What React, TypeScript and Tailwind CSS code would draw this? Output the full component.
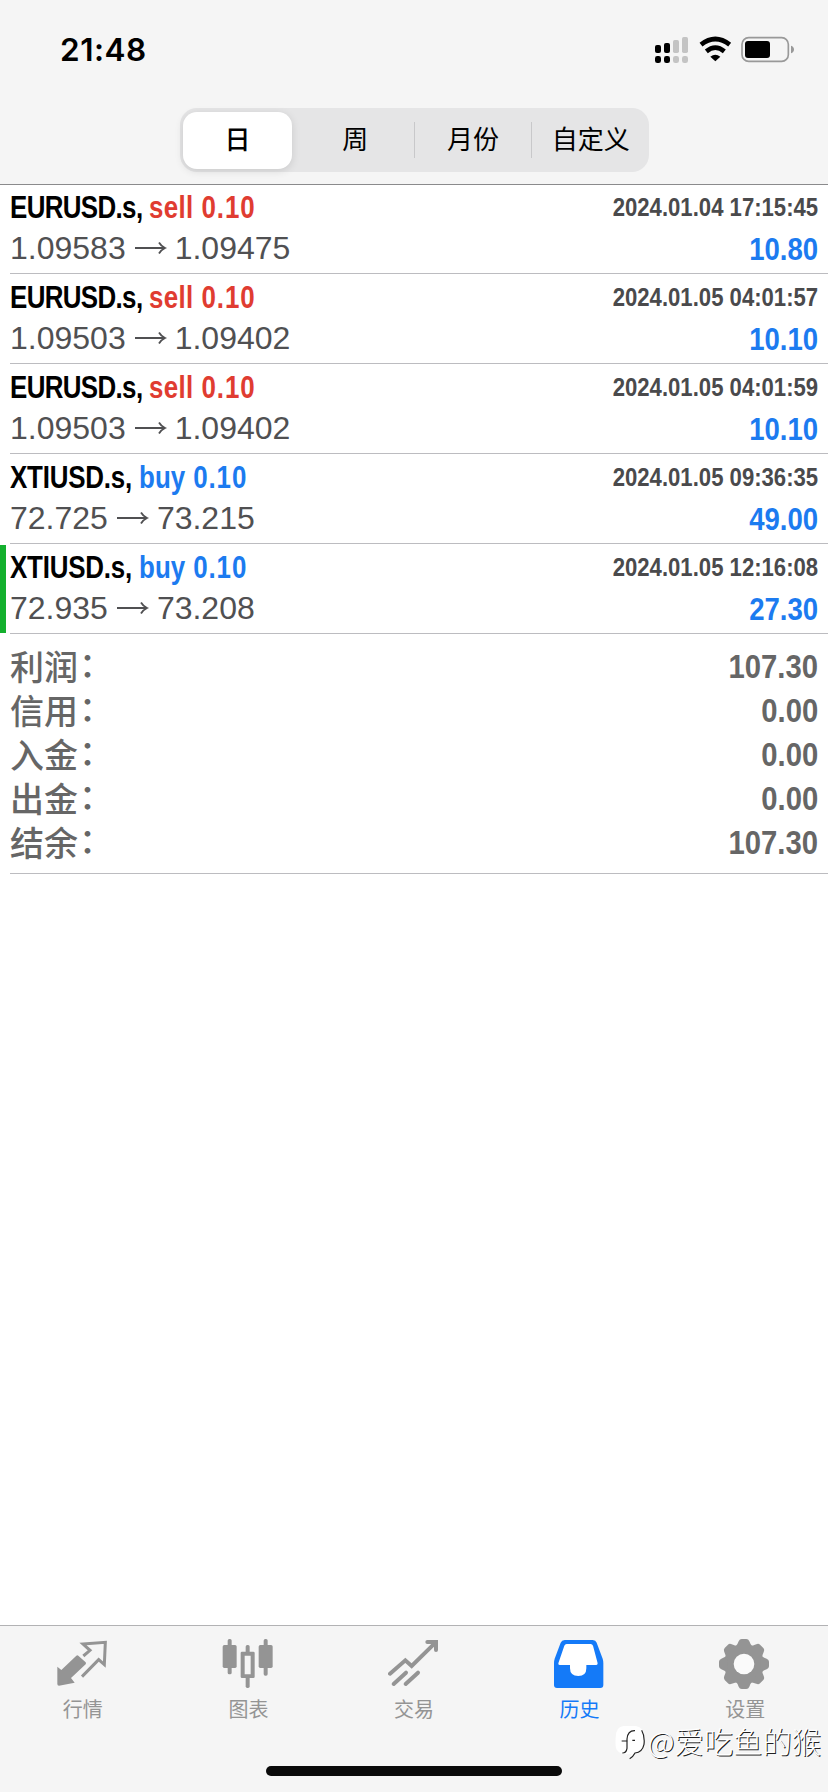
import { useState } from "react";
import type { ReactNode } from "react";

type Deal = {
  symbol: string;
  side: "buy" | "sell";
  volume: string;
  open: string;
  close: string;
  time: string;
  profit: string;
  marked?: boolean;
};

const periods = ["日", "周", "月份", "自定义"];

const symbolTracking: Record<string, string> = {
  "EURUSD.s": "tracking-[-0.8px]",
  "XTIUSD.s": "tracking-[-0.25px]",
};

const deals: Deal[] = [
  { symbol: "EURUSD.s", side: "sell", volume: "0.10", open: "1.09583", close: "1.09475", time: "2024.01.04 17:15:45", profit: "10.80" },
  { symbol: "EURUSD.s", side: "sell", volume: "0.10", open: "1.09503", close: "1.09402", time: "2024.01.05 04:01:57", profit: "10.10" },
  { symbol: "EURUSD.s", side: "sell", volume: "0.10", open: "1.09503", close: "1.09402", time: "2024.01.05 04:01:59", profit: "10.10" },
  { symbol: "XTIUSD.s", side: "buy", volume: "0.10", open: "72.725", close: "73.215", time: "2024.01.05 09:36:35", profit: "49.00" },
  { symbol: "XTIUSD.s", side: "buy", volume: "0.10", open: "72.935", close: "73.208", time: "2024.01.05 12:16:08", profit: "27.30", marked: true },
];

const summary = [
  { label: "利润", value: "107.30" },
  { label: "信用", value: "0.00" },
  { label: "入金", value: "0.00" },
  { label: "出金", value: "0.00" },
  { label: "结余", value: "107.30" },
];

function TabIcon({ children }: { children: ReactNode }) {
  return (
    <svg viewBox="0 0 156 156" className="w-[52px] h-[52px]" fill="none">
      {children}
    </svg>
  );
}

function QuotesIcon() {
  return (
    <TabIcon>
      <path d="M1 86L13 96L58 53Q61 50 64 53L86 73Q88 76 86 79L42 120L53 134L6 143Q1 143 1 138Z" fill="currentColor" />
      <path d="M79 54L99 37L78 18L145 13L142 80L125 65L75 116" stroke="currentColor" strokeWidth="9" />
    </TabIcon>
  );
}

function ChartIcon() {
  return (
    <TabIcon>
      <g fill="currentColor">
        <rect x="2" y="21" width="42" height="69" rx="5" />
        <rect x="17" y="3" width="12" height="106" rx="5" />
        <path fillRule="evenodd" d="M60 41H94Q98 41 98 45V116Q98 120 94 120H60Q56 120 56 116V45Q56 41 60 41ZM68 53V109H86V53Z" />
        <rect x="71" y="21" width="12" height="26" rx="5" />
        <rect x="71" y="114" width="12" height="36" rx="5" />
        <rect x="110" y="21" width="42" height="69" rx="5" />
        <rect x="125" y="3" width="12" height="110" rx="5" />
      </g>
    </TabIcon>
  );
}

function TradeIcon() {
  return (
    <TabIcon>
      <g stroke="currentColor" strokeWidth="12" strokeLinecap="round">
        <path d="M6 107L52 67L71 84L140 16" />
        <path d="M118 12H144V36" />
        <path d="M17 138L54 104M53 138L90 104" />
      </g>
    </TabIcon>
  );
}

function HistoryIcon() {
  return (
    <TabIcon>
      <path
        d="M32 6H116Q125 6 128 14L146 62Q148 68 148 75V141Q148 150 139 150H9Q0 150 0 141V75Q0 68 2 62L20 14Q23 6 32 6Z"
        fill="currentColor"
      />
      <path
        d="M38 18H110Q115 18 117 23L131 76Q131 81 127 81H97V91Q97 114 73 114Q48 114 48 91V81H17Q12 81 13 76L31 23Q33 18 38 18Z"
        fill="#fff"
      />
    </TabIcon>
  );
}

function SettingsIcon() {
  return (
    <TabIcon>
      <g fill="currentColor">
        <circle cx="75" cy="78" r="58" />
        {[0, 45, 90, 135, 180, 225, 270, 315].map((angle) => (
          <path key={angle} d="M48 28Q56 20 59 10Q62 3 68 3H82Q88 3 91 10Q94 20 102 28Z" transform={`rotate(${angle} 75 78)`} />
        ))}
      </g>
      <circle cx="75" cy="78" r="31" fill="#fafafa" />
    </TabIcon>
  );
}

const tabs = [
  { label: "行情", icon: <QuotesIcon /> },
  { label: "图表", icon: <ChartIcon /> },
  { label: "交易", icon: <TradeIcon /> },
  { label: "历史", icon: <HistoryIcon /> },
  { label: "设置", icon: <SettingsIcon /> },
];

function StatusIcons() {
  return (
    <svg viewBox="0 0 420 84" className="w-[140px] h-7" fill="none">
      {/* Signal */}
      <g fill="#000">
        <rect x="3" y="27" width="18" height="24" rx="6" />
        <rect x="30" y="21" width="18" height="30" rx="6" />
        <rect x="3" y="60" width="18" height="21" rx="7" />
        <rect x="30" y="60" width="18" height="21" rx="7" />
      </g>
      <g fill="#c4c4c4">
        <rect x="57" y="12" width="18" height="39" rx="5" />
        <rect x="84" y="3" width="18" height="48" rx="5" />
        <rect x="57" y="60" width="18" height="21" rx="7" />
        <rect x="84" y="60" width="18" height="21" rx="7" />
      </g>
      {/* Wifi */}
      <path d="M141 26Q184 -8 227 26" stroke="#000" strokeWidth="14" />
      <path d="M157 46Q184 24 211 46" stroke="#000" strokeWidth="14" />
      <path d="M169 62Q184 51 199 62L184 76Z" fill="#000" />
      {/* Battery */}
      <rect x="264" y="5" width="139" height="71" rx="20" stroke="#999" strokeWidth="5" />
      <rect x="273" y="15" width="75" height="51" rx="9" fill="#000" />
      <path d="M411 29Q420 32 420 40.500Q420 49 411 52Z" fill="#999" />
    </svg>
  );
}

function DealRow({ deal }: { deal: Deal }) {
  return (
    <div className="flex h-[90px]">
      <div className={deal.marked ? "w-1.5 mt-px mb-px bg-[#14b02e]" : "w-1.5"} />
      <div className="flex-1 ml-1 pt-[3px] pr-2.5 border-b border-[#bcbcc0]">
        <div className="flex justify-between h-10 leading-10 font-bold whitespace-pre">
          <div className="text-[32px] origin-left scale-x-[0.81]">
            <span className={symbolTracking[deal.symbol]}>{deal.symbol}, </span>
            <span className={deal.side === "sell" ? "tracking-[0.35px] text-[#e03c31]" : "text-[#1c7bf0]"}>
              {deal.side}
              <span className="tracking-[1.1px]"> {deal.volume}</span>
            </span>
          </div>
          <div className="text-[25px] text-[#4a4a4c] origin-right scale-x-[0.885]">{deal.time}</div>
        </div>
        <div className="flex justify-between pt-[2px] h-[42px] leading-10 whitespace-pre">
          <div className="flex -mt-px text-[32px] text-[#505052]">
            <span>{deal.open}</span>
            <svg viewBox="0 0 49 40" className="w-[49px] h-10" fill="none" stroke="currentColor" strokeWidth="1.8">
              <path d="M9 20H39M33 14.500Q35 18 39 20Q35 22 33 25.500" />
            </svg>
            <span>{deal.close}</span>
          </div>
          <div className="text-[32px] font-bold text-[#1c7bf0] origin-right scale-x-[0.86]">{deal.profit}</div>
        </div>
      </div>
    </div>
  );
}

export default function App() {
  const [period, setPeriod] = useState("日");
  const [tab, setTab] = useState("历史");

  return (
    <div className="relative flex flex-col w-[828px] h-[1792px] overflow-hidden bg-white text-black font-['Liberation_Sans','Noto_Sans_CJK_SC',sans-serif]">
      {/* Header */}
      <div className="h-[185px] shrink-0 bg-[#f5f5f5] border-b border-[#8a8a8c]">
        <div className="flex justify-between items-center h-[108px] pl-[60px] pr-[34px] pb-2">
          <span className="font-['Inter'] font-semibold text-[31.500px] tracking-[0.5px]">21:48</span>
          <StatusIcons />
        </div>
        <div className="flex items-center w-[469px] h-16 ml-[180px] pl-[3px] rounded-[17px] bg-[#e5e5e6]">
          {periods.map((p, i) => (
            <button
              key={p}
              onClick={() => setPeriod(p)}
              className={
                p === period
                  ? "w-[109px] h-[57px] mr-1 rounded-[14px] bg-white shadow-[0_2px_8px_rgba(0,0,0,0.12)] text-[26px] font-medium"
                  : "flex items-center flex-1 h-[57px] text-[26px]"
              }
            >
              {p !== period && <span className={i > 1 ? "w-px h-9 bg-[#c8c8ca]" : "w-px h-9"} />}
              <span className="flex-1">{p}</span>
            </button>
          ))}
        </div>
      </div>

      {/* Deals */}
      <div className="-mt-px">
        {deals.map((deal) => (
          <DealRow key={deal.time} deal={deal} />
        ))}
      </div>

      {/* Summary */}
      <div className="ml-2.5 pt-[9px] pr-2.5 h-60 border-b border-[#bcbcc0] text-[#666]">
        {summary.map((item) => (
          <div key={item.label} className="flex justify-between h-11 leading-[44px] text-[34px]">
            <span className="flex font-medium pt-[3px]">
              {item.label}
              <span className="-mt-[3px] ml-px">：</span>
            </span>
            <span className="font-bold pt-px origin-right scale-x-[0.86]">{item.value}</span>
          </div>
        ))}
      </div>

      {/* Tab bar */}
      <div className="flex flex-col items-center mt-auto h-[167px] shrink-0 bg-[#f5f5f5] border-t border-[#b2b2b4]">
        <div className="flex w-full pt-3">
          {tabs.map((t) => (
            <button
              key={t.label}
              onClick={() => setTab(t.label)}
              className={
                t.label === tab
                  ? "flex flex-1 flex-col items-center text-[#147af8]"
                  : "flex flex-1 flex-col items-center text-[#949494]"
              }
            >
              {t.icon}
              <span className="mt-1.5 text-[20px] leading-7">{t.label}</span>
            </button>
          ))}
        </div>
        <div className="mt-auto mb-4 w-[296px] h-2.5 rounded-full bg-[#0a0a0a]" />
      </div>

      {/* Watermark */}
      <div className="absolute right-[7px] bottom-8 flex items-center h-10 text-white">
        <svg viewBox="0 0 90 105" className="w-[30px] h-[35px] mr-[3px] mt-1" fill="none">
          <path d="M26 3H62Q89 8 88 38V62Q84 82 58 86Q52 96 44 101L50 86Q18 92 5 74Q0 66 2 38Q2 5 26 3Z" fill="#fff" />
          <path d="M80 16Q90 34 87 58Q82 82 60 84Q54 96 44 101" stroke="#222" strokeWidth="3.500" />
          <path d="M60 17Q38 16 36 42V70Q34 84 22 84M20 48H38M52 46H60" stroke="#222" strokeWidth="3.500" />
        </svg>
        <span className="text-[29.300px] leading-10 font-['Noto_Sans_CJK_SC',sans-serif] font-light [text-shadow:1px_1px_0.5px_#222]">@爱吃鱼的猴</span>
      </div>
    </div>
  );
}
